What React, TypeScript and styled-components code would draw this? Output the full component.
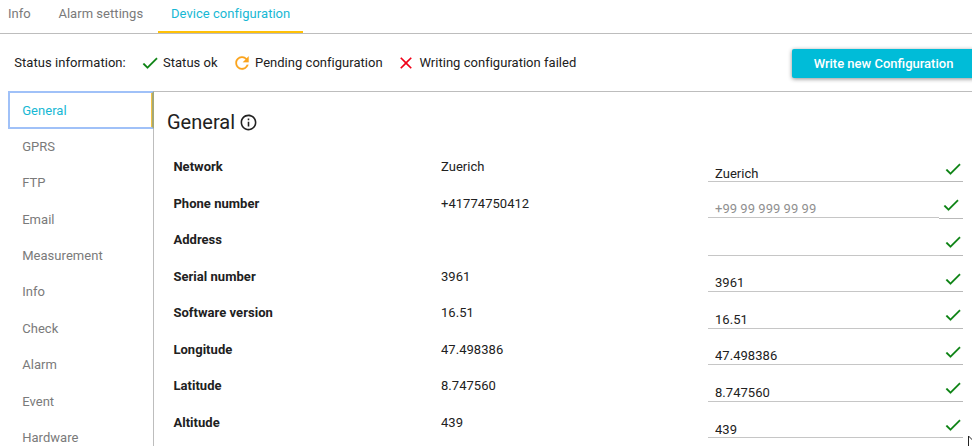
import React from "react";
import styled, { createGlobalStyle, css } from "styled-components";

const GlobalStyle = createGlobalStyle`
  * { box-sizing: border-box; }
  body {
    margin: 0;
    background: #fff;
    color: #212121;
    font-family: Roboto, "Liberation Sans", sans-serif;
    font-size: 13px;
    letter-spacing: 0.04px;
    overflow: hidden;
  }
`;

const Page = styled.div`
  position: relative;
  display: flex;
  flex-direction: column;
  width: 972px;
  height: 446px;
  overflow: hidden;
`;

const Tabs = styled.nav`
  display: flex;
  flex: none;
  height: 34px;
  border-bottom: 1px solid #bdbdbd;
`;

const Tab = styled.a<{ $width: number; $pad: number; $active?: boolean }>`
  width: ${(p) => p.$width}px;
  height: 33px;
  padding-left: ${(p) => p.$pad}px;
  line-height: 28px;
  white-space: nowrap;
  color: ${(p) => (p.$active ? "#17b8d4" : "#7a7a7a")};
  border-bottom: 2px solid ${(p) => (p.$active ? "#ffc107" : "transparent")};
`;

const StatusBar = styled.div`
  display: flex;
  flex: none;
  align-items: center;
  height: 57px;
  padding-left: 14.3px;
`;

const StatusTitle = styled.span`
  width: 125.7px;
  white-space: nowrap;
`;

const StatusItem = styled.span<{ $width: number }>`
  display: flex;
  align-items: center;
  gap: 3px;
  width: ${(p) => p.$width}px;
  white-space: nowrap;
  letter-spacing: 0.025px;
`;

const WriteButton = styled.button`
  width: 184px;
  height: 29px;
  margin: 1px -4px 0 auto;
  padding: 0 1px 0 0;
  flex: none;
  border: 0;
  border-radius: 2px;
  background: #00bcd8;
  color: #fff;
  font: 500 13px Roboto, sans-serif;
  box-shadow: 0 1px 4px rgba(0, 0, 0, 0.45);
`;

const Body = styled.div`
  display: flex;
  flex: 1;
  min-height: 0;
  margin-left: 8px;
  border-top: 1px solid #bdbdbd;
`;

const Sidebar = styled.aside`
  flex: none;
  width: 146px;
  padding-top: 0.55px;
  border-right: 1px solid #bdbdbd;
`;

const SideItem = styled.a<{ $active?: boolean }>`
  display: block;
  height: 36.375px;
  padding-left: 14.2px;
  line-height: 36.1px;
  color: #7a7a7a;
  ${(p) =>
    p.$active &&
    css`
      position: relative;
      color: #17b8d4;
      &::after {
        content: "";
        position: absolute;
        inset: -1.55px -1px 0 0;
        border: 2px solid #a0c1f8;
        border-right: 2px solid #a4a878;
        box-shadow: inset -1px 0 #f3c243;
      }
    `}
`;

const Main = styled.main`
  flex: 1;
  padding: 18px 9px 0 13px;
`;

const Heading = styled.h1`
  display: flex;
  align-items: center;
  gap: 4px;
  height: 24px;
  margin: 0 0 15px;
  font-size: 20px;
  font-weight: 400;
  letter-spacing: 0;
`;

const Row = styled.div`
  display: grid;
  grid-template-columns: 267.6px 267.4px 255px;
  height: 36.57px;
  padding-left: 6.4px;
  margin-right: -1px;
`;

const Label = styled.span`
  font-weight: 700;
  line-height: 36px;
`;

const Current = styled.span`
  line-height: 36px;
`;

const Field = styled.div`
  display: flex;
  width: 255px;
  height: 33px;
  margin: 0.4px 0 0 -0.4px;
`;

const Input = styled.input<{ $short?: boolean }>`
  width: ${(p) => (p.$short ? 231 : 232)}px;
  height: ${(p) => (p.$short ? 32 : 33)}px;
  padding: ${(p) => (p.$short ? 14 : 15.4)}px 7px 0;
  border: 0;
  border-bottom: 1px solid #c6c6c6;
  outline: 0;
  background: transparent;
  color: #212121;
  font: 13px Roboto, sans-serif;
  letter-spacing: 0.04px;
  &::placeholder { color: #909090; opacity: 1; }
`;

const Mark = styled.span<{ $short?: boolean }>`
  flex: 1;
  padding: ${(p) => (p.$short ? "9px 0 0 2px" : "9.65px 0 0 3px")};
  border-bottom: 1px solid #b9b9b9;
`;

const Icon = styled.svg`
  display: block;
  flex: none;
`;

const Pointer = styled.svg`
  position: absolute;
  left: 968px;
  top: 435px;
`;

const icons = {
  check: "M9 16.17L4.83 12l-1.42 1.41L9 19 21 7l-1.41-1.41z",
  refresh:
    "M17.65 6.35C16.2 4.9 14.21 4 12 4c-4.42 0-7.99 3.58-7.99 8s3.57 8 7.99 8c3.73 0 6.84-2.55 7.73-6h-2.08c-.82 2.33-3.04 4-5.65 4-3.31 0-6-2.69-6-6s2.69-6 6-6c1.66 0 3.14.69 4.22 1.78L13 11h7V4l-2.35 2.35z",
  close:
    "M19 6.41L17.59 5 12 10.59 6.41 5 5 6.41 10.59 12 5 17.59 6.41 19 12 13.41 17.59 19 19 17.59 13.41 12z",
  info: "M11 17h2v-6h-2v6zm1-15C6.48 2 2 6.48 2 12s4.48 10 10 10 10-4.48 10-10S17.52 2 12 2zm0 18c-4.41 0-8-3.59-8-8s3.59-8 8-8 8 3.59 8 8-3.59 8-8 8zM11 9h2V7h-2v2z",
};

function Glyph({ name, color, size = 20, bold = 0 }: { name: keyof typeof icons; color: string; size?: number; bold?: number }) {
  return (
    <Icon width={size} height={size} viewBox="0 0 24 24" fill={color} stroke={color} strokeWidth={bold}>
      <path d={icons[name]} />
    </Icon>
  );
}

const sections = ["General", "GPRS", "FTP", "Email", "Measurement", "Info", "Check", "Alarm", "Event", "Hardware"];

const rows = [
  { label: "Network", value: "Zuerich", input: "Zuerich" },
  { label: "Phone number", value: "+41774750412", input: "", placeholder: "+99 99 999 99 99" },
  { label: "Address", value: "", input: "" },
  { label: "Serial number", value: "3961", input: "3961" },
  { label: "Software version", value: "16.51", input: "16.51" },
  { label: "Longitude", value: "47.498386", input: "47.498386" },
  { label: "Latitude", value: "8.747560", input: "8.747560" },
  { label: "Altitude", value: "439", input: "439" },
];

export default function App() {
  return (
    <Page>
      <GlobalStyle />
      <Tabs>
        <Tab $width={50} $pad={8}>Info</Tab>
        <Tab $width={108} $pad={8.4}>Alarm settings</Tab>
        <Tab $width={145} $pad={13} $active>Device configuration</Tab>
      </Tabs>
      <StatusBar>
        <StatusTitle>Status information:</StatusTitle>
        <StatusItem $width={92}><Glyph name="check" color="#08800f" bold={0.3} />Status ok</StatusItem>
        <StatusItem $width={164.4}><Glyph name="refresh" color="#fba41c" bold={0.2} />Pending configuration</StatusItem>
        <StatusItem $width={189}><Glyph name="close" color="#f00018" />Writing configuration failed</StatusItem>
        <WriteButton>Write new Configuration</WriteButton>
      </StatusBar>
      <Body>
        <Sidebar>
          {sections.map((s, i) => (
            <SideItem key={s} $active={i === 0}>{s}</SideItem>
          ))}
        </Sidebar>
        <Main>
          <Heading>General <Glyph name="info" color="#212121" size={19} /></Heading>
          {rows.map((r) => (
            <Row key={r.label}>
              <Label>{r.label}</Label>
              <Current>{r.value}</Current>
              <Field>
                <Input $short={!!r.placeholder} defaultValue={r.input} placeholder={r.placeholder} />
                <Mark $short={!!r.placeholder}><Glyph name="check" color="#08800f" bold={0.3} /></Mark>
              </Field>
            </Row>
          ))}
        </Main>
      </Body>
      <Pointer width="12" height="18" viewBox="0 0 12 18">
        <path d="M.5 1v15l3.5-3.5 2.5 5 2-1-2.5-5h5z" fill="#fff" stroke="#222" />
      </Pointer>
    </Page>
  );
}
